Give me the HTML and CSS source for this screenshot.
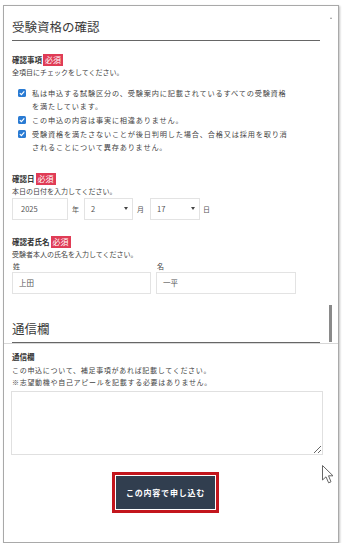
FILE: index.html
```html
<!DOCTYPE html>
<html lang="ja">
<head>
    <meta charset="UTF-8">
    <meta name="viewport" content="width=device-width, initial-scale=1.0">
    <title>受験資格の確認</title>
    <link rel="stylesheet" href="styles.css">
</head>
<body>
    <div class="frame">
        <div class="scroll">
            <h2 class="sec-title">受験資格の確認</h2>

            <!-- 確認事項 -->
            <div class="field field-check">
                <div class="label">確認事項<span class="req">必須</span></div>
                <p class="help">全項目にチェックをしてください。</p>
                <ul class="checks">
                    <li>
                        <span class="cb"><svg viewBox="0 0 8 8" width="8" height="8"><path d="M1.8 4.1 L3.4 5.6 L6.3 2.4" fill="none" stroke="#fff" stroke-width="1.2"/></svg></span>
                        <span>私は申込する試験区分の、受験案内に記載されているすべての受験資格<br>を満たしています。</span>
                    </li>
                    <li>
                        <span class="cb"><svg viewBox="0 0 8 8" width="8" height="8"><path d="M1.8 4.1 L3.4 5.6 L6.3 2.4" fill="none" stroke="#fff" stroke-width="1.2"/></svg></span>
                        <span>この申込の内容は事実に相違ありません。</span>
                    </li>
                    <li>
                        <span class="cb"><svg viewBox="0 0 8 8" width="8" height="8"><path d="M1.8 4.1 L3.4 5.6 L6.3 2.4" fill="none" stroke="#fff" stroke-width="1.2"/></svg></span>
                        <span>受験資格を満たさないことが後日判明した場合、合格又は採用を取り消<br>されることについて異存ありません。</span>
                    </li>
                </ul>
            </div>

            <!-- 確認日 -->
            <div class="field field-date">
                <div class="label">確認日<span class="req">必須</span></div>
                <p class="help">本日の日付を入力してください。</p>
                <div class="date-row">
                    <div class="input year">2025</div>
                    <span class="unit u-year">年</span>
                    <div class="input select sel-month"><span>2</span><i class="arrow"></i></div>
                    <span class="unit u-month">月</span>
                    <div class="input select sel-day"><span>17</span><i class="arrow"></i></div>
                    <span class="unit u-day">日</span>
                </div>
            </div>

            <!-- 確認者氏名 -->
            <div class="field field-name">
                <div class="label">確認者氏名<span class="req">必須</span></div>
                <p class="help">受験者本人の氏名を入力してください。</p>
                <div class="name-row">
                    <div class="name-col">
                        <div class="sub">姓</div>
                        <div class="input name">上田</div>
                    </div>
                    <div class="name-col">
                        <div class="sub">名</div>
                        <div class="input name">一平</div>
                    </div>
                </div>
            </div>

            <h2 class="sec-title sec-second">通信欄</h2>
        </div>

        <div class="footer">
            <div class="label">通信欄</div>
            <p class="help help-wide">この申込について、補足事項があれば記載してください。<br>※志望動機や自己アピールを記載する必要はありません。</p>
            <textarea class="memo"></textarea>
            <div class="actions">
                <div class="btn-ring"><div class="btn">この内容で申し込む</div></div>
            </div>
        </div>

        <span class="scroll-up"></span>
        <span class="scrollbar"></span>
    </div>

    <svg class="cursor" viewBox="0 0 12 19" width="12" height="19">
        <path d="M0.5 0.5 L0.5 15 L4 11.8 L6.6 17.8 L9 16.8 L6.5 10.8 L11 10.8 Z" fill="#fff" stroke="#666" stroke-width="1"/>
    </svg>
</body>
</html>
```

FILE: styles.css
```css
body {
    margin: 0;
    background: #fff;
    font-family: "Noto Sans CJK JP", "Noto Sans", sans-serif;
    color: #333;
}
.frame {
    position: relative;
    margin: 5px 0 0 3px;
    width: 334px;
    height: 536px;
    border: 1px solid #a9a9a9;
    box-shadow: 1px 1px 2px rgba(0, 0, 0, 0.25);
    background: #fff;
    display: flex;
    flex-direction: column;
}
.scroll {
    flex: none;
    height: 337px;
    overflow: hidden;
    padding: 0 18px 0 8px;
}

/* 見出し */
.sec-title {
    margin: 12px 0 0;
    padding-bottom: 5px;
    font-size: 12.5px;
    font-weight: 400;
    line-height: 17px;
    color: #3a3a3a;
    border-bottom: 1px solid #666;
}
.sec-second {
    margin-top: 26px;
}

/* 項目 */
.label {
    display: flex;
    align-items: center;
    font-size: 7.5px;
    font-weight: 700;
    line-height: 12px;
    color: #333;
}
.req {
    margin-left: 1px;
    padding: 0 2px;
    background: #e03c56;
    color: #fff;
    font-size: 8px;
    font-weight: 400;
    line-height: 12px;
}
.help {
    margin: 0;
    font-size: 7px;
    line-height: 12px;
    color: #444;
}
.field-check {
    margin-top: 13px;
}
.checks {
    margin: 8.5px 0 0;
    padding: 0 0 0 6px;
    list-style: none;
}
.checks li {
    display: flex;
    margin-bottom: 1px;
    font-size: 7.2px;
    letter-spacing: 0.8px;
    line-height: 13px;
    color: #444;
    white-space: nowrap;
}
.cb {
    flex: none;
    width: 8px;
    height: 8px;
    margin: 2.5px 6px 0 0;
    border-radius: 1.5px;
    background: #2a7bd3;
}
.cb svg {
    display: block;
}

/* 確認日 */
.field-date {
    margin-top: 19px;
}
.date-row {
    display: flex;
    align-items: center;
    margin-top: 1px;
}
.input {
    box-sizing: border-box;
    height: 22px;
    border: 1px solid #e3e3e3;
    font-size: 7.5px;
    line-height: 20px;
    color: #555;
}
.year {
    width: 56px;
    padding-left: 8px;
}
.select {
    display: flex;
    align-items: center;
    justify-content: space-between;
    padding: 0 4px 0 6px;
}
.sel-month {
    width: 49px;
}
.sel-day {
    width: 50px;
}
.arrow {
    width: 0;
    height: 0;
    border-left: 2.5px solid transparent;
    border-right: 2.5px solid transparent;
    border-top: 3px solid #444;
}
.unit {
    font-size: 7px;
    color: #555;
}
.u-year {
    margin: 0 5px 0 4px;
}
.u-month {
    margin: 0 6px 0 4px;
}
.u-day {
    margin-left: 3px;
}

/* 氏名 */
.field-name {
    margin-top: 16px;
}
.name-row {
    display: grid;
    grid-template-columns: 139px 140px;
    column-gap: 5px;
}
.sub {
    padding-left: 1px;
    font-size: 7px;
    line-height: 12px;
    color: #444;
}
.name {
    padding-left: 6px;
}

/* 通信欄 */
.footer {
    flex: 1;
    padding: 7px 16px 0 8px;
    border-top: 1px solid #d8d8d8;
}
.help-wide {
    margin-top: 1px;
    letter-spacing: 0.7px;
}
.memo {
    display: block;
    box-sizing: border-box;
    width: 312px;
    height: 64px;
    margin: 3px 0 0 -1px;
    border: 1px solid #e0e0e0;
    border-radius: 0;
    outline: none;
}
.actions {
    display: flex;
    justify-content: center;
    margin-top: 17px;
    padding-right: 3px;
}
.btn-ring {
    padding: 1px;
    border: 3px solid #c3161d;
    background: #fff;
}
.btn {
    width: 99px;
    height: 33px;
    background: #313e4f;
    color: #fff;
    font-size: 8px;
    font-weight: 700;
    letter-spacing: 0.8px;
    line-height: 33px;
    text-align: center;
}

/* スクロールバー */
.scrollbar {
    position: absolute;
    left: 325px;
    top: 299px;
    width: 3px;
    height: 37px;
    background: #8a8a8a;
}
.scroll-up {
    position: absolute;
    left: 326px;
    top: 11px;
    width: 0;
    height: 0;
    border-left: 1.5px solid transparent;
    border-right: 1.5px solid transparent;
    border-bottom: 2px solid #999;
}
.cursor {
    position: absolute;
    left: 322px;
    top: 465px;
}
```
